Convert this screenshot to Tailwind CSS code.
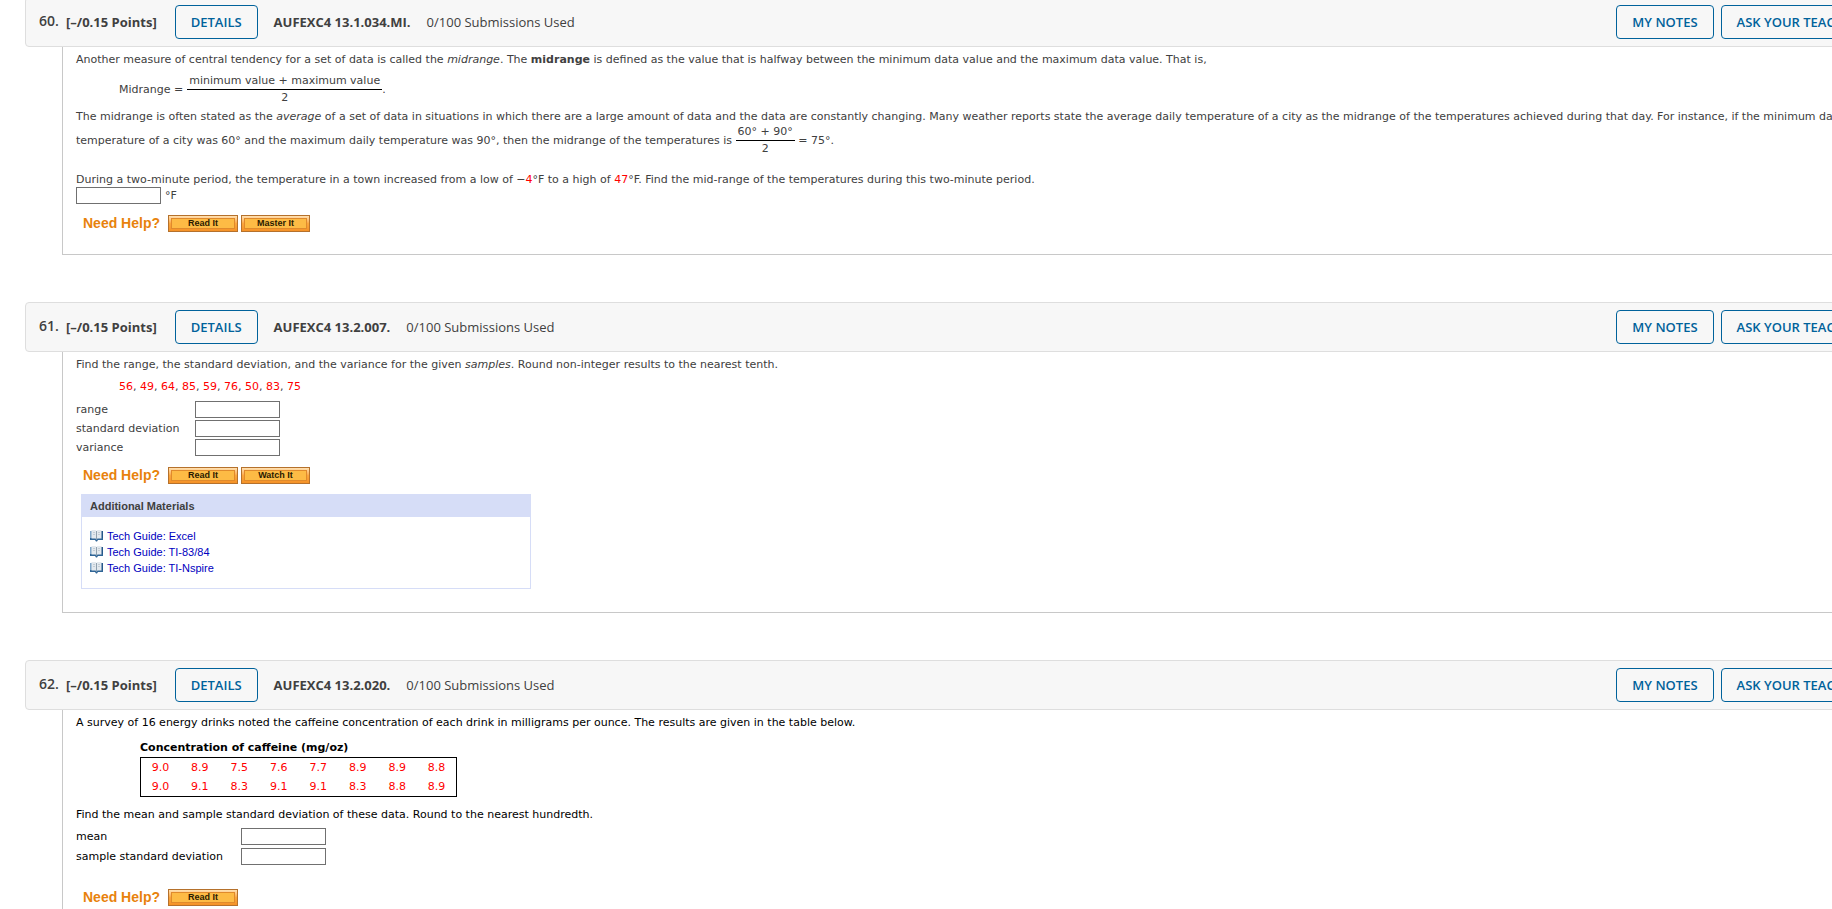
<!DOCTYPE html>
<html lang="en">
<head>
    <meta charset="UTF-8">
    <meta name="viewport" content="width=device-width, initial-scale=1.0">
    <title>Homework</title>
    <script src="https://cdn.jsdelivr.net/npm/@tailwindcss/browser@4"></script>
</head>
<body class="bg-white overflow-x-hidden font-['DejaVu_Sans',Verdana,sans-serif] text-[11px] leading-[14px] text-[#404040]">
    <svg class="hidden">
        <symbol id="book" viewBox="0 0 13 12">
            <path d="M0 1h2v8H0z" fill="#7fa6c9"/>
            <path d="M11 1h2v9h-2z" fill="#24578a"/>
            <path d="M0 8h13v2H8l-1 1.500h-1L5 10H0z" fill="#2f6596"/>
            <path d="M1.500 0h4l1 1 1-1h4v8.500h-4l-1 1-1-1h-4z" fill="#e3e9ee"/>
            <path d="M6 1h1v8.500H6z" fill="#8fa0ae"/>
            <path d="M3 2h2v1H3zM3 4h2v1H3zM8 2h2v1H8zM8 4h2v1H8z" fill="#c3ccd4"/>
        </symbol>
    </svg>

    <main class="-mt-[3px] ml-[25px] -mr-16 space-y-[47px]">
        <!-- Question 60 -->
        <section>
            <header class="flex items-center h-[50px] pl-[13px] pr-[19px] bg-[#f7f7f7] border border-[#dedede] rounded-sm font-['Open_Sans',sans-serif] text-[13px]">
                <h2 class="w-[27px] pb-0.5 font-semibold text-sm">60.</h2>
                <span class="font-bold">[–/0.15 Points]</span>
                <button type="button" class="ml-[18px] h-[34px] px-[15px] border border-[#00629b] rounded text-[#00629b] font-semibold">DETAILS</button>
                <span class="ml-4 font-bold">AUFEXC4 13.1.034.MI.</span>
                <span class="ml-4">0/100 Submissions Used</span>
                <div class="ml-auto flex gap-[7px] text-[#00629b] font-semibold">
                    <button type="button" class="h-[34px] px-[15px] border border-[#00629b] rounded">MY NOTES</button>
                    <button type="button" class="h-[34px] px-[15px] border border-[#00629b] rounded">ASK YOUR TEACHER</button>
                </div>
            </header>
            <div class="ml-[37px] pl-[13px] pr-4 pt-[6px] pb-[22px] border-l border-b border-[#c8c8c8]">
                <p>Another measure of central tendency for a set of data is called the <i>midrange</i>. The <b>midrange</b> is defined as the value that is halfway between the minimum data value and the maximum data value. That is,</p>
                <div class="flex items-center mt-[7px] ml-[43px]">
                    <span>Midrange =</span>
                    <span class="ml-1 flex flex-col text-center">
                        <span class="px-0.5 pb-px border-b border-black">minimum value + maximum value</span>
                        <span class="pt-px">2</span>
                    </span>
                    <span>.</span>
                </div>
                <p class="mt-1 leading-4">The midrange is often stated as the <i>average</i> of a set of data in situations in which there are a large amount of data and the data are constantly changing. Many weather reports state the average daily temperature of a city as the midrange of the temperatures achieved during that day. For instance, if the minimum daily temperature of a city was 60° and the maximum daily temperature was 90°, then the midrange of the temperatures is
                    <span class="inline-flex flex-col align-middle text-center leading-[14px]">
                        <span class="px-0.5 pb-px border-b border-black">60° + 90°</span>
                        <span class="pt-px">2</span>
                    </span>
                    = 75°.</p>
                <p class="mt-[17px]"><label for="midrange">During a two-minute period, the temperature in a town increased from a low of −<span class="text-[#ff0000]">4</span>°F to a high of <span class="text-[#ff0000]">47</span>°F. Find the mid-range of the temperatures during this two-minute period.</label></p>
                <div class="flex items-center gap-1">
                    <input type="text" id="midrange" class="w-[85px] h-[17px] px-0.5 border border-[#707070]">
                    <span>°F</span>
                </div>
                <div class="flex items-center mt-[11px] ml-[7px] font-['Liberation_Sans',Arial,sans-serif] font-bold">
                    <span class="mr-2 text-sm leading-[17px] text-[#e8820c]">Need Help?</span>
                    <button type="button" class="w-[70px] h-[17px] mr-[3px] p-0.5 border border-[#b5712c] bg-linear-to-b from-[#ffe0b0] via-[#fba63c] to-[#f59227] text-[9px] leading-[9px] text-[#2b1a00]"><span class="block border border-[#e08a2c] bg-[#fdbb45]">Read It</span></button>
                    <button type="button" class="w-[69px] h-[17px] p-0.5 border border-[#b5712c] bg-linear-to-b from-[#ffe0b0] via-[#fba63c] to-[#f59227] text-[9px] leading-[9px] text-[#2b1a00]"><span class="block border border-[#e08a2c] bg-[#fdbb45]">Master It</span></button>
                </div>
            </div>
        </section>

        <!-- Question 61 -->
        <section>
            <header class="flex items-center h-[50px] pl-[13px] pr-[19px] bg-[#f7f7f7] border border-[#dedede] rounded-sm font-['Open_Sans',sans-serif] text-[13px]">
                <h2 class="w-[27px] pb-0.5 font-semibold text-sm">61.</h2>
                <span class="font-bold">[–/0.15 Points]</span>
                <button type="button" class="ml-[18px] h-[34px] px-[15px] border border-[#00629b] rounded text-[#00629b] font-semibold">DETAILS</button>
                <span class="ml-4 font-bold">AUFEXC4 13.2.007.</span>
                <span class="ml-4">0/100 Submissions Used</span>
                <div class="ml-auto flex gap-[7px] text-[#00629b] font-semibold">
                    <button type="button" class="h-[34px] px-[15px] border border-[#00629b] rounded">MY NOTES</button>
                    <button type="button" class="h-[34px] px-[15px] border border-[#00629b] rounded">ASK YOUR TEACHER</button>
                </div>
            </header>
            <div class="ml-[37px] pl-[13px] pr-4 pt-[6px] pb-[23px] border-l border-b border-[#c8c8c8]">
                <p>Find the range, the standard deviation, and the variance for the given <i>samples</i>. Round non-integer results to the nearest tenth.</p>
                <p class="mt-2 ml-[43px]"><span class="text-[#ff0000]">56</span>, <span class="text-[#ff0000]">49</span>, <span class="text-[#ff0000]">64</span>, <span class="text-[#ff0000]">85</span>, <span class="text-[#ff0000]">59</span>, <span class="text-[#ff0000]">76</span>, <span class="text-[#ff0000]">50</span>, <span class="text-[#ff0000]">83</span>, <span class="text-[#ff0000]">75</span></p>
                <div class="grid grid-cols-[119px_85px] items-center gap-y-0.5 mt-[7px]">
                    <label for="range">range</label>
                    <input type="text" id="range" class="h-[17px] px-0.5 border border-[#707070]">
                    <label for="deviation">standard deviation</label>
                    <input type="text" id="deviation" class="h-[17px] px-0.5 border border-[#707070]">
                    <label for="variance">variance</label>
                    <input type="text" id="variance" class="h-[17px] px-0.5 border border-[#707070]">
                </div>
                <div class="flex items-center mt-[11px] ml-[7px] font-['Liberation_Sans',Arial,sans-serif] font-bold">
                    <span class="mr-2 text-sm leading-[17px] text-[#e8820c]">Need Help?</span>
                    <button type="button" class="w-[70px] h-[17px] mr-[3px] p-0.5 border border-[#b5712c] bg-linear-to-b from-[#ffe0b0] via-[#fba63c] to-[#f59227] text-[9px] leading-[9px] text-[#2b1a00]"><span class="block border border-[#e08a2c] bg-[#fdbb45]">Read It</span></button>
                    <button type="button" class="w-[69px] h-[17px] p-0.5 border border-[#b5712c] bg-linear-to-b from-[#ffe0b0] via-[#fba63c] to-[#f59227] text-[9px] leading-[9px] text-[#2b1a00]"><span class="block border border-[#e08a2c] bg-[#fdbb45]">Watch It</span></button>
                </div>
                <div class="w-[450px] mt-2.5 ml-[5px] border border-[#d6ddf7] font-['Liberation_Sans',Arial,sans-serif]">
                    <h3 class="h-[22px] pl-2 bg-[#d6ddf7] font-bold leading-[22px]">Additional Materials</h3>
                    <ul class="px-2 pt-[11px] pb-3 leading-4 text-[#0000c0]">
                        <li><a href="#" class="flex items-center gap-1"><svg class="w-[13px] h-3"><use href="#book"/></svg>Tech Guide: Excel</a></li>
                        <li><a href="#" class="flex items-center gap-1"><svg class="w-[13px] h-3"><use href="#book"/></svg>Tech Guide: TI-83/84</a></li>
                        <li><a href="#" class="flex items-center gap-1"><svg class="w-[13px] h-3"><use href="#book"/></svg>Tech Guide: TI-Nspire</a></li>
                    </ul>
                </div>
            </div>
        </section>

        <!-- Question 62 -->
        <section>
            <header class="flex items-center h-[50px] pl-[13px] pr-[19px] bg-[#f7f7f7] border border-[#dedede] rounded-sm font-['Open_Sans',sans-serif] text-[13px]">
                <h2 class="w-[27px] pb-0.5 font-semibold text-sm">62.</h2>
                <span class="font-bold">[–/0.15 Points]</span>
                <button type="button" class="ml-[18px] h-[34px] px-[15px] border border-[#00629b] rounded text-[#00629b] font-semibold">DETAILS</button>
                <span class="ml-4 font-bold">AUFEXC4 13.2.020.</span>
                <span class="ml-4">0/100 Submissions Used</span>
                <div class="ml-auto flex gap-[7px] text-[#00629b] font-semibold">
                    <button type="button" class="h-[34px] px-[15px] border border-[#00629b] rounded">MY NOTES</button>
                    <button type="button" class="h-[34px] px-[15px] border border-[#00629b] rounded">ASK YOUR TEACHER</button>
                </div>
            </header>
            <div class="ml-[37px] pl-[13px] pr-4 pt-[6px] pb-[23px] border-l border-b border-[#c8c8c8] text-black">
                <p>A survey of 16 energy drinks noted the caffeine concentration of each drink in milligrams per ounce. The results are given in the table below.</p>
                <table class="w-[317px] mt-[11px] ml-16 table-fixed border border-black text-center text-[#ff0000]">
                    <caption class="pb-0.5 text-left font-bold text-black">Concentration of caffeine (mg/oz)</caption>
                    <tbody class="leading-[19px]">
                        <tr>
                            <td>9.0</td>
                            <td>8.9</td>
                            <td>7.5</td>
                            <td>7.6</td>
                            <td>7.7</td>
                            <td>8.9</td>
                            <td>8.9</td>
                            <td>8.8</td>
                        </tr>
                        <tr>
                            <td>9.0</td>
                            <td>9.1</td>
                            <td>8.3</td>
                            <td>9.1</td>
                            <td>9.1</td>
                            <td>8.3</td>
                            <td>8.8</td>
                            <td>8.9</td>
                        </tr>
                    </tbody>
                </table>
                <p class="mt-[11px]">Find the mean and sample standard deviation of these data. Round to the nearest hundredth.</p>
                <div class="grid grid-cols-[165px_85px] items-center gap-y-[3px] mt-1.5">
                    <label for="mean">mean</label>
                    <input type="text" id="mean" class="h-[17px] px-0.5 border border-[#707070]">
                    <label for="sampleDeviation">sample standard deviation</label>
                    <input type="text" id="sampleDeviation" class="h-[17px] px-0.5 border border-[#707070]">
                </div>
                <div class="flex items-center mt-6 ml-[7px] font-['Liberation_Sans',Arial,sans-serif] font-bold">
                    <span class="mr-2 text-sm leading-[17px] text-[#e8820c]">Need Help?</span>
                    <button type="button" class="w-[70px] h-[17px] mr-[3px] p-0.5 border border-[#b5712c] bg-linear-to-b from-[#ffe0b0] via-[#fba63c] to-[#f59227] text-[9px] leading-[9px] text-[#2b1a00]"><span class="block border border-[#e08a2c] bg-[#fdbb45]">Read It</span></button>
                </div>
            </div>
        </section>
    </main>
</body>
</html>
